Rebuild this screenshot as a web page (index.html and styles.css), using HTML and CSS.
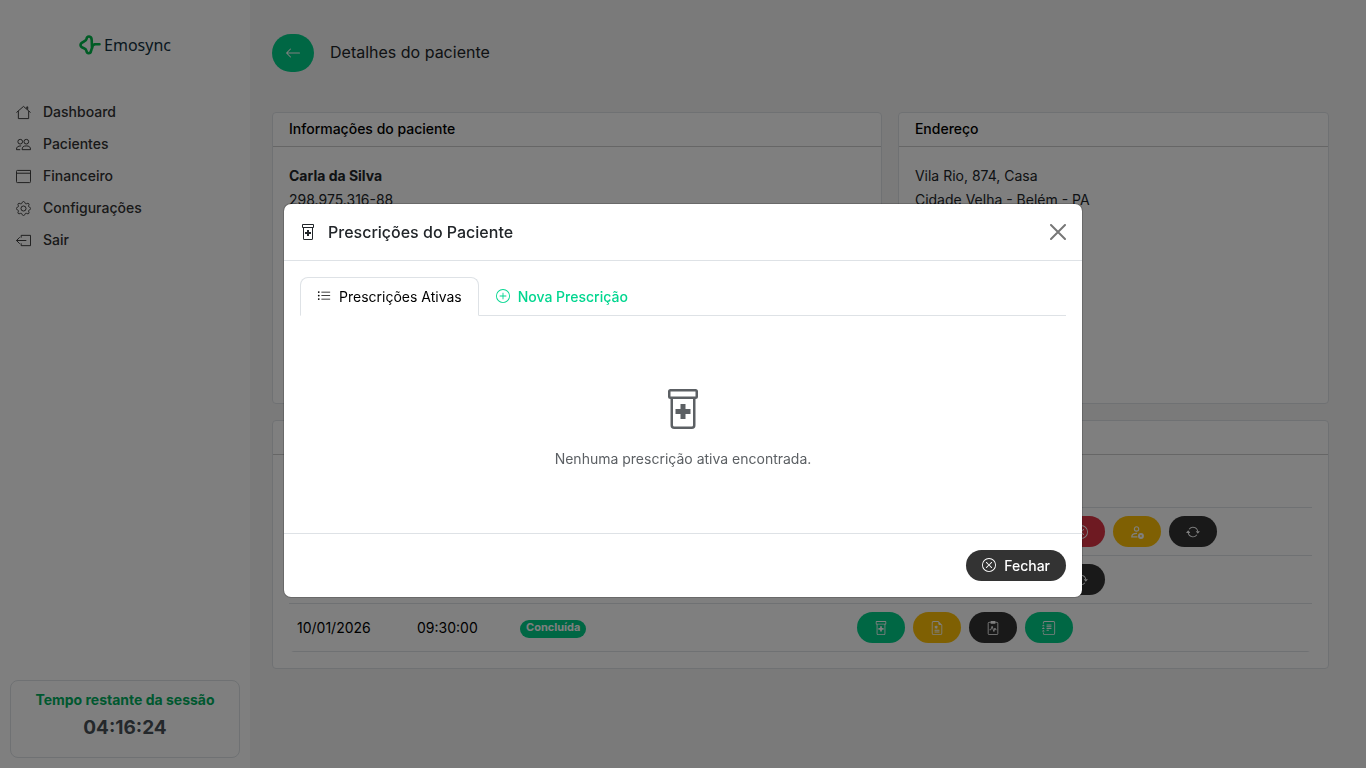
FILE: index.html
```html
<!DOCTYPE html>
<html lang="pt-BR">
<head>
  <meta charset="UTF-8">
  <meta name="viewport" content="width=device-width, initial-scale=1.0">
  <title>Emosync</title>

  <link rel="stylesheet" href="styles.css">
</head>
<body>
  <!-- Icons -->
  <svg class="sprite" aria-hidden="true">
    <symbol id="prescription" viewBox="0 0 16 16">
      <path d="M7 6h2v2h2v2H9v2H7v-2H5V8h2z"/>
      <path d="M2 1a1 1 0 0 1 1-1h10a1 1 0 0 1 1 1v2a1 1 0 0 1-1 1v10.5a1.5 1.5 0 0 1-1.5 1.5h-7A1.5 1.5 0 0 1 3 14.5V4a1 1 0 0 1-1-1zm2 3v10.5a.5.5 0 0 0 .5.5h7a.5.5 0 0 0 .5-.5V4zM3 3h10V1H3z"/>
    </symbol>
    <symbol id="x-circle" viewBox="0 0 16 16">
      <path d="M8 15A7 7 0 1 1 8 1a7 7 0 0 1 0 14m0 1A8 8 0 1 0 8 0a8 8 0 0 0 0 16"/>
      <path d="M4.646 4.646a.5.5 0 0 1 .708 0L8 7.293l2.646-2.647a.5.5 0 0 1 .708.708L8.707 8l2.647 2.646a.5.5 0 0 1-.708.708L8 8.707l-2.646 2.647a.5.5 0 0 1-.708-.708L7.293 8 4.646 5.354a.5.5 0 0 1 0-.708"/>
    </symbol>
    <symbol id="repeat" viewBox="0 0 16 16">
      <path d="M11.534 7h3.932a.25.25 0 0 1 .192.41l-1.966 2.36a.25.25 0 0 1-.384 0l-1.966-2.36a.25.25 0 0 1 .192-.41m-11 2h3.932a.25.25 0 0 0 .192-.41L2.692 6.23a.25.25 0 0 0-.384 0L.342 8.59A.25.25 0 0 0 .534 9"/>
      <path d="M8 3c-1.552 0-2.94.707-3.857 1.818a.5.5 0 1 1-.771-.636A6.002 6.002 0 0 1 13.917 7H12.9A5 5 0 0 0 8 3M3.1 9a5.002 5.002 0 0 0 8.757 2.182.5.5 0 1 1 .771.636A6.002 6.002 0 0 1 2.083 9z"/>
    </symbol>
    <symbol id="person-gear" viewBox="0 0 16 16">
      <path fill="none" stroke="currentColor" stroke-width="1.300" d="M7.500 7a2.500 2.500 0 1 0 0-5a2.500 2.500 0 0 0 0 5M8.500 13.500H2c0-2.500 1.500-4 6-4"/>
      <circle cx="12.500" cy="12.500" r="2.200" fill="none" stroke="currentColor" stroke-width="2.400"/>
    </symbol>
    <symbol id="file-medical" viewBox="0 0 16 16">
      <path d="M7.500 5.500a.5.5 0 0 0-1 0v.634l-.549-.317a.5.5 0 1 0-.5.866L6 7l-.549.317a.5.5 0 1 0 .5.866l.549-.317V8.500a.5.5 0 1 0 1 0v-.634l.549.317a.5.5 0 1 0 .5-.866L8 7l.549-.317a.5.5 0 1 0-.5-.866l-.549.317zm-2 4.500a.5.5 0 0 0 0 1h5a.5.5 0 0 0 0-1zm0 2a.5.5 0 0 0 0 1h5a.5.5 0 0 0 0-1z"/>
      <path d="M14 14V4.500L9.500 0H4a2 2 0 0 0-2 2v12a2 2 0 0 0 2 2h8a2 2 0 0 0 2-2M9.500 3A1.500 1.500 0 0 0 11 4.500h2V14a1 1 0 0 1-1 1H4a1 1 0 0 1-1-1V2a1 1 0 0 1 1-1h5.500z"/>
    </symbol>
    <symbol id="clipboard-pulse" viewBox="0 0 16 16">
      <path fill="none" stroke="currentColor" d="M5 1.500H3.500a1 1 0 0 0-1 1v12a1 1 0 0 0 1 1h9a1 1 0 0 0 1-1v-12a1 1 0 0 0-1-1H11M4 10h1.500L7 6l2 6 1.200-4 .8 2h1"/>
      <path d="M6 0h4a1 1 0 0 1 1 1v1a1 1 0 0 1-1 1H6a1 1 0 0 1-1-1V1a1 1 0 0 1 1-1"/>
    </symbol>
    <symbol id="journal-text" viewBox="0 0 16 16">
      <path d="M5 10.500a.5.5 0 0 1 .5-.5h2a.5.5 0 0 1 0 1h-2a.5.5 0 0 1-.5-.5m0-2a.5.5 0 0 1 .5-.5h5a.5.5 0 0 1 0 1h-5a.5.5 0 0 1-.5-.5m0-2a.5.5 0 0 1 .5-.5h5a.5.5 0 0 1 0 1h-5a.5.5 0 0 1-.5-.5m0-2a.5.5 0 0 1 .5-.5h5a.5.5 0 0 1 0 1h-5a.5.5 0 0 1-.5-.5"/>
      <path d="M3 0h10a2 2 0 0 1 2 2v12a2 2 0 0 1-2 2H3a2 2 0 0 1-2-2v-1h1v1a1 1 0 0 0 1 1h10a1 1 0 0 0 1-1V2a1 1 0 0 0-1-1H3a1 1 0 0 0-1 1v1H1V2a2 2 0 0 1 2-2"/>
      <path d="M1 5v-.5a.5.5 0 0 1 1 0V5h.5a.5.5 0 0 1 0 1h-2a.5.5 0 0 1 0-1zm0 3v-.5a.5.5 0 0 1 1 0V8h.5a.5.5 0 0 1 0 1h-2a.5.5 0 0 1 0-1zm0 3v-.5a.5.5 0 0 1 1 0v.5h.5a.5.5 0 0 1 0 1h-2a.5.5 0 0 1 0-1z"/>
    </symbol>
  </svg>

  <div class="layout">
    <aside class="sidebar">
      <div class="logo">
        <svg width="22" height="20" viewBox="0 0 22 20" fill="none" stroke="#00b84a" stroke-width="2.600" stroke-linecap="round" stroke-linejoin="round">
          <path d="M13 13.500 12.700 5C12.500.5 8 .5 7.500 4 7.200 7 1.500 6.500 1.500 10s5.300 2.500 5.800 5.500c.5 3.500 4.200 3.500 4.700.5L14 10l2-.8h4.500"/>
        </svg>
        <span>Emosync</span>
      </div>
      <nav class="menu">
        <a href="#">
          <svg class="menu-icon" viewBox="0 0 16 16"><path d="M.5 8 8 1.500 15.500 8M2.500 6.500v8h11v-8M11.500 4V2h1v3"/></svg>
          Dashboard
        </a>
        <a href="#">
          <svg class="menu-icon" viewBox="0 0 16 16"><circle cx="4.500" cy="5" r="2.500"/><circle cx="11" cy="5" r="2.500"/><path d="M6.500 13.500c0-3 1.500-4 4.500-4s4.500 1 4.500 4zM5.500 9.500c-3.500 0-5 1-5 4h4"/></svg>
          Pacientes
        </a>
        <a href="#">
          <svg class="menu-icon" viewBox="0 0 16 16"><path d="M1.500 1.500h14v12a1 1 0 0 1-1 1h-13a1 1 0 0 1-1-1v-11a1 1 0 0 1 1-1M1 4.500h14.500"/></svg>
          Financeiro
        </a>
        <a href="#">
          <svg class="menu-icon" viewBox="0 0 16 16"><circle cx="8" cy="8" r="2.700"/><path d="M6.400 2.200C7-.1 9-.1 9.600 2.200c.3.700 1 1 1.700.7 2-1.200 3.300.1 2.200 2.100-.3.600 0 1.300.6 1.500 2.200.6 2.200 2.500 0 3.100-.6.200-.9.900-.6 1.500 1.100 2-.2 3.300-2.200 2.100-.7-.3-1.400 0-1.700.7-.6 2.300-2.600 2.300-3.200 0-.3-.7-1-1-1.700-.7-2 1.200-3.300-.1-2.200-2.100.3-.6 0-1.300-.6-1.500-2.200-.6-2.200-2.500 0-3.100.6-.2.900-.9.600-1.500-1.100-2 .2-3.300 2.200-2.100.7.300 1.400 0 1.700-.7z"/></svg>
          Configurações
        </a>
        <a href="#">
          <svg class="menu-icon" viewBox="0 0 16 16"><path d="M5.500 5V2.500h10v11h-10V11M11 8H.500M4 4.500.500 8 4 11.500"/></svg>
          Sair
        </a>
      </nav>
      <div class="session">
        <div class="session-title">Tempo restante da sessão</div>
        <div class="session-time">04:16:24</div>
      </div>
    </aside>

    <main class="content">
      <header class="page-header">
        <button class="btn-back" type="button" aria-label="Voltar">
          <svg width="16" height="16" viewBox="0 0 16 16" fill="currentColor"><path d="M15 8a.5.5 0 0 0-.5-.5H2.707l3.147-3.146a.5.5 0 1 0-.708-.708l-4 4a.5.5 0 0 0 0 .708l4 4a.5.5 0 0 0 .708-.708L2.707 8.500H14.500A.5.5 0 0 0 15 8"/></svg>
        </button>
        <h1>Detalhes do paciente</h1>
      </header>

      <div class="cards">
        <section class="card card-info">
          <h2>Informações do paciente</h2>
          <div class="card-body">
            <strong>Carla da Silva</strong>
            <div>298.975.316-88</div>
          </div>
        </section>
        <section class="card card-address">
          <h2>Endereço</h2>
          <div class="card-body">
            <div>Vila Rio, 874, Casa</div>
            <div>Cidade Velha - Belém - PA</div>
          </div>
        </section>
        <section class="card card-schedule">
          <h2>Consultas</h2>
          <div class="card-body card-body-table">
            <table>
              <thead>
                <tr>
                  <th class="col-date">Data</th>
                  <th class="col-time">Hora</th>
                  <th class="col-status">Status</th>
                  <th>Ações</th>
                </tr>
              </thead>
              <tbody>
                <tr>
                  <td></td>
                  <td></td>
                  <td></td>
                  <td>
                    <div class="actions">
                      <button class="btn green wide" type="button" aria-label="Iniciar"></button>
                      <button class="btn green" type="button" aria-label="Prescrições"><svg class="icon"><use href="#prescription"/></svg></button>
                      <button class="btn red" type="button" aria-label="Cancelar"><svg class="icon"><use href="#x-circle"/></svg></button>
                      <button class="btn yellow" type="button" aria-label="Paciente"><svg class="icon"><use href="#person-gear"/></svg></button>
                      <button class="btn dark" type="button" aria-label="Remarcar"><svg class="icon"><use href="#repeat"/></svg></button>
                    </div>
                  </td>
                </tr>
                <tr>
                  <td></td>
                  <td></td>
                  <td></td>
                  <td>
                    <div class="actions">
                      <button class="btn green wide" type="button" aria-label="Iniciar"></button>
                      <button class="btn green" type="button" aria-label="Prescrições"><svg class="icon"><use href="#prescription"/></svg></button>
                      <button class="btn dark" type="button" aria-label="Remarcar"><svg class="icon"><use href="#repeat"/></svg></button>
                    </div>
                  </td>
                </tr>
                <tr>
                  <td>10/01/2026</td>
                  <td>09:30:00</td>
                  <td><span class="badge">Concluída</span></td>
                  <td>
                    <div class="actions">
                      <button class="btn green" type="button" aria-label="Prescrições"><svg class="icon"><use href="#prescription"/></svg></button>
                      <button class="btn yellow" type="button" aria-label="Atestado"><svg class="icon"><use href="#file-medical"/></svg></button>
                      <button class="btn dark" type="button" aria-label="Evolução"><svg class="icon"><use href="#clipboard-pulse"/></svg></button>
                      <button class="btn green" type="button" aria-label="Anotações"><svg class="icon"><use href="#journal-text"/></svg></button>
                    </div>
                  </td>
                </tr>
              </tbody>
            </table>
          </div>
        </section>
      </div>
    </main>
  </div>

  <div class="backdrop">
    <div class="modal" role="dialog" aria-modal="true" aria-labelledby="modal-title">
      <div class="modal-header">
        <svg class="icon-lg"><use href="#prescription"/></svg>
        <h2 id="modal-title">Prescrições do Paciente</h2>
        <button class="btn-close" type="button" aria-label="Fechar janela">
          <svg width="16" height="16" viewBox="0 0 16 16" stroke="currentColor" stroke-width="2" stroke-linecap="round"><path d="M1 1l14 14M15 1 1 15"/></svg>
        </button>
      </div>
      <div class="modal-body">
        <div class="tabs" role="tablist">
          <button class="tab active" type="button" role="tab" aria-selected="true">
            <svg class="icon" viewBox="0 0 16 16"><path d="M5 3h10v1H5zm0 4h10v1H5zm0 4h10v1H5z"/><circle cx="2" cy="3.500" r="1"/><circle cx="2" cy="7.500" r="1"/><circle cx="2" cy="11.500" r="1"/></svg>
            <span>Prescrições Ativas</span>
          </button>
          <button class="tab" type="button" role="tab" aria-selected="false">
            <svg class="icon" viewBox="0 0 16 16"><path d="M8 15A7 7 0 1 1 8 1a7 7 0 0 1 0 14m0 1A8 8 0 1 0 8 0a8 8 0 0 0 0 16"/><path d="M8 4a.5.5 0 0 1 .5.5v3h3a.5.5 0 0 1 0 1h-3v3a.5.5 0 0 1-1 0v-3h-3a.5.5 0 0 1 0-1h3v-3A.5.5 0 0 1 8 4"/></svg>
            <span>Nova Prescrição</span>
          </button>
        </div>
        <div class="empty">
          <svg class="icon-xl"><use href="#prescription"/></svg>
          <p>Nenhuma prescrição ativa encontrada.</p>
        </div>
      </div>
      <div class="modal-footer">
        <button class="btn dark btn-text" type="button">
          <svg class="icon"><use href="#x-circle"/></svg>
          <span>Fechar</span>
        </button>
      </div>
    </div>
  </div>
</body>
</html>
```
FILE: styles.css
```css
* {
  box-sizing: border-box;
}

body {
  margin: 0;
  font-family: Inter, "Liberation Sans", sans-serif;
  font-size: 14px;
  line-height: 24px;
  color: #212529;
  background: #f5f5f5;
}

h1, h2, p {
  margin: 0;
}

button {
  font: inherit;
  cursor: pointer;
}

svg {
  flex-shrink: 0;
}

.sprite {
  display: none;
}

.icon {
  width: 14px;
  height: 14px;
  fill: currentColor;
}

.icon-lg {
  width: 16px;
  height: 16px;
  fill: currentColor;
}

.icon-xl {
  width: 40px;
  height: 40px;
  fill: currentColor;
}

.layout {
  display: flex;
  min-height: 100vh;
}

/* Sidebar */
.sidebar {
  width: 250px;
  flex-shrink: 0;
  display: flex;
  flex-direction: column;
  padding: 32px 10px 10px;
  background: #fff;
}

.logo {
  display: flex;
  justify-content: center;
  align-items: center;
  gap: 3px;
  height: 26px;
  font-family: "Noto Sans", sans-serif;
  font-size: 16px;
  color: #123040;
}

.menu {
  display: flex;
  flex-direction: column;
  margin-top: 38px;
}

.menu a {
  display: flex;
  align-items: center;
  gap: 12px;
  height: 32px;
  padding: 0 6px;
  font-weight: 500;
  color: #333;
  text-decoration: none;
}

.menu-icon {
  width: 15px;
  height: 15px;
  fill: none;
  stroke: currentColor;
}

.session {
  height: 78px;
  margin-top: auto;
  padding-top: 7px;
  border: 1px solid #dee2e6;
  border-radius: 8px;
  text-align: center;
  font-weight: 700;
}

.session-title {
  color: #00b060;
}

.session-time {
  margin-top: 4px;
  font-size: 19px;
  color: #495057;
}

/* Page */
.content {
  flex: 1;
  padding: 34px 37px 34px 22px;
}

.page-header {
  display: flex;
  align-items: center;
  gap: 16px;
  margin-bottom: 40px;
}

.page-header h1 {
  padding-bottom: 2px;
  font-size: 16px;
  font-weight: 400;
}

.btn-back {
  display: flex;
  justify-content: center;
  align-items: center;
  width: 42px;
  height: 38px;
  border: 0;
  border-radius: 20px;
  color: #fff;
  background: #00ce89;
}

.cards {
  display: grid;
  grid-template-columns: repeat(12, 1fr);
  gap: 16px;
}

.card {
  border: 1px solid #dee2e6;
  border-radius: 4px;
  background: #fff;
}

.card h2 {
  height: 34px;
  padding: 0 16px;
  border-bottom: 1px solid #ccc;
  font-size: 14px;
  font-weight: 500;
  line-height: 32px;
  color: #000;
}

.card-body {
  padding: 17px 16px 16px;
}

.card-body-table {
  padding: 16px;
}

.card-info {
  grid-column: span 7;
  min-height: 292px;
}

.card-address {
  grid-column: span 5;
}

.card-schedule {
  grid-column: span 12;
}

table {
  width: 100%;
  border-spacing: 0;
  border-radius: 5px;
  overflow: hidden;
  table-layout: fixed;
  color: #000;
}

th {
  height: 37px;
  padding: 0 8px;
  border-bottom: 1px solid #dee2e6;
  text-align: left;
  font-weight: 500;
}

td {
  height: 48px;
  padding: 8px;
  border-bottom: 1px solid #dee2e6;
}

.col-date {
  width: 120px;
}

.col-time {
  width: 103px;
}

.col-status {
  width: 337px;
}

.badge {
  display: inline-block;
  padding: 0 6px 4px;
  border-radius: 10px;
  font-size: 11px;
  font-weight: 700;
  line-height: 14px;
  vertical-align: middle;
  color: #fff;
  background: #00ce89;
}

.actions {
  display: flex;
  gap: 8px;
}

.btn {
  display: inline-flex;
  justify-content: center;
  align-items: center;
  gap: 8px;
  width: 48px;
  height: 31px;
  padding: 0;
  border: 0;
  border-radius: 16px;
  color: #fff;
}

.wide {
  width: 136px;
}

.green {
  background: #00ce89;
}

.red {
  background: #dc3545;
}

.yellow {
  background: #ffc107;
}

.dark {
  background: #333;
}

.btn-text {
  width: auto;
  padding: 0 16px;
  font-weight: 500;
}

.btn-text span,
.tab span {
  padding-top: 2px;
}

/* Modal */
.backdrop {
  position: fixed;
  inset: 0;
  display: flex;
  justify-content: center;
  align-items: center;
  padding: 32px 0 0;
  background: rgba(0, 0, 0, 0.5);
}

.modal {
  width: 800px;
  max-width: 100%;
  border: 1px solid rgba(0, 0, 0, 0.175);
  border-radius: 8px;
  background: #fff;
  background-clip: padding-box;
}

.modal-header {
  display: flex;
  align-items: center;
  gap: 12px;
  padding: 16px;
  border-bottom: 1px solid #dee2e6;
}

.modal-header h2 {
  flex: 1;
  font-size: 16px;
  font-weight: 500;
}

.btn-close {
  display: flex;
  padding: 0;
  border: 0;
  color: #777;
  background: none;
}

.modal-body {
  padding: 16px;
}

.tabs {
  display: flex;
  border-bottom: 1px solid #dee2e6;
}

.tab {
  display: flex;
  align-items: center;
  gap: 8px;
  height: 39px;
  margin-bottom: -1px;
  padding: 0 16px;
  border: 1px solid transparent;
  border-radius: 8px 8px 0 0;
  font-weight: 500;
  color: #00d68f;
  background: none;
}

.tab.active {
  border-color: #dee2e6 #dee2e6 #fff;
  font-weight: 400;
  color: #000;
  background: #fff;
}

.empty {
  display: flex;
  flex-direction: column;
  align-items: center;
  gap: 18px;
  padding: 73px 0 46px;
  color: #5c6064;
}

.modal-footer {
  display: flex;
  justify-content: flex-end;
  padding: 16px;
  border-top: 1px solid #dee2e6;
}
```
